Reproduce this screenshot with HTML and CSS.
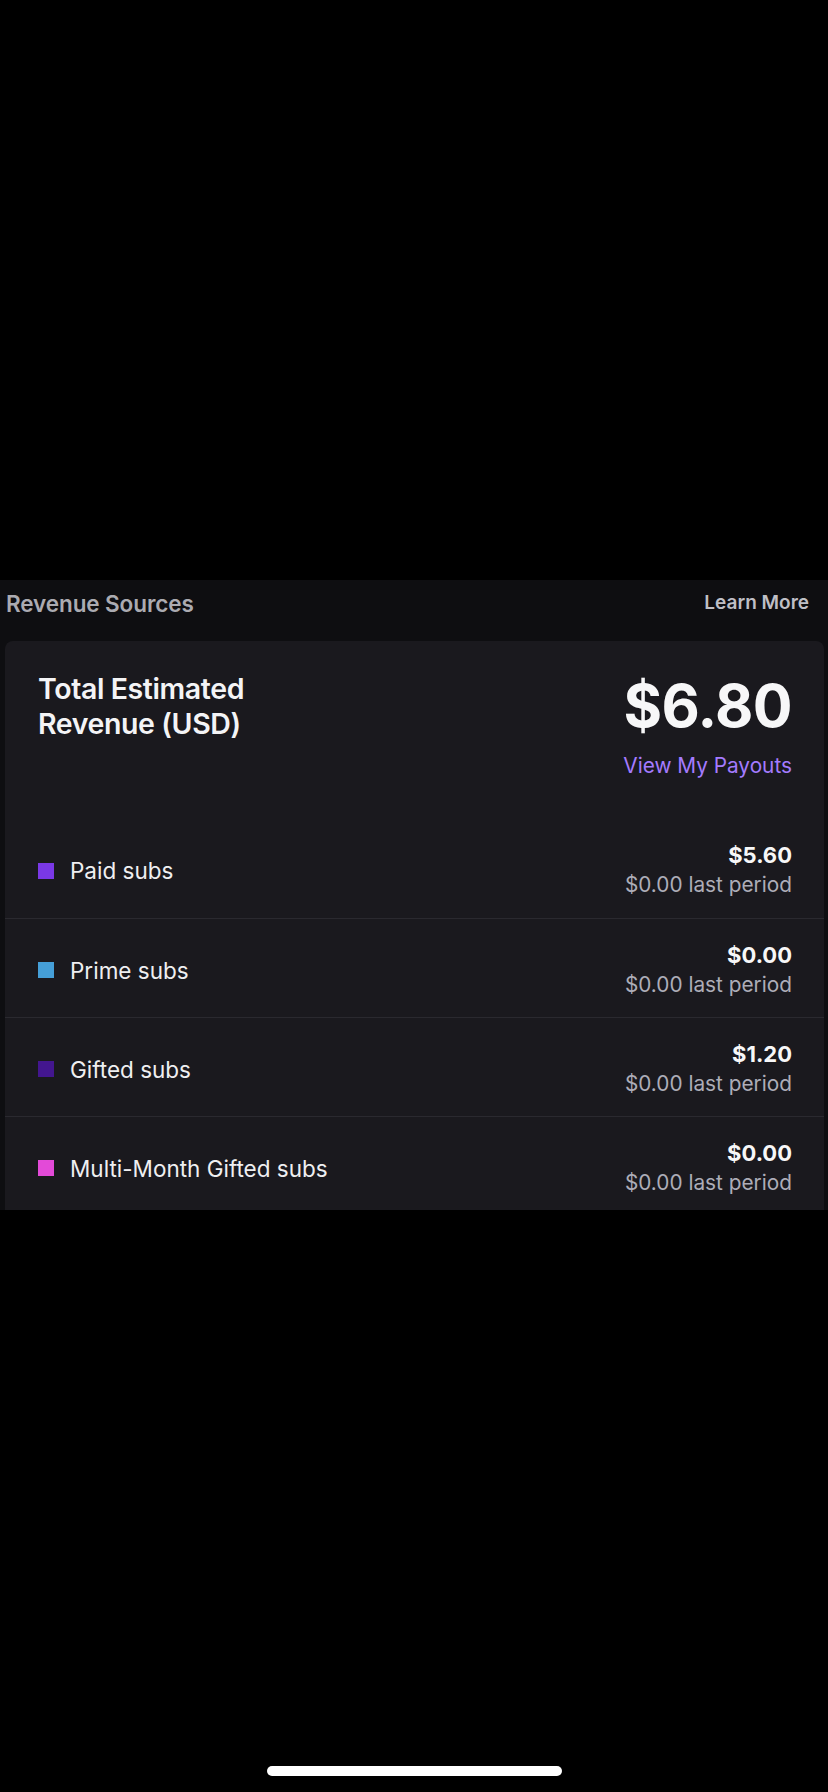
FILE: index.html
```html
<!DOCTYPE html>
<html lang="en">
<head>
<meta charset="utf-8">
<title>Revenue Sources</title>
<link rel="stylesheet" href="styles.css">
</head>
<body>
<div class="top-space"></div>
<section class="section">
  <header class="section-head">
    <h2 class="section-title">Revenue Sources</h2>
    <a class="learn-more" href="#">Learn More</a>
  </header>
  <div class="card">
    <div class="card-head">
      <h3 class="total-title">Total Estimated<br>Revenue (USD)</h3>
      <div class="total-side">
        <div class="total-amount">$6.80</div>
        <a class="payouts-link" href="#">View My Payouts</a>
      </div>
    </div>
    <ul class="rows">
      <li class="row">
        <div class="row-label"><span class="swatch swatch-paid"></span><span>Paid subs</span></div>
        <div class="row-values"><div class="row-amount">$5.60</div><div class="row-prev">$0.00 last period</div></div>
      </li>
      <li class="row">
        <div class="row-label"><span class="swatch swatch-prime"></span><span>Prime subs</span></div>
        <div class="row-values"><div class="row-amount">$0.00</div><div class="row-prev">$0.00 last period</div></div>
      </li>
      <li class="row">
        <div class="row-label"><span class="swatch swatch-gifted"></span><span>Gifted subs</span></div>
        <div class="row-values"><div class="row-amount">$1.20</div><div class="row-prev">$0.00 last period</div></div>
      </li>
      <li class="row">
        <div class="row-label"><span class="swatch swatch-multi"></span><span>Multi-Month Gifted subs</span></div>
        <div class="row-values"><div class="row-amount">$0.00</div><div class="row-prev">$0.00 last period</div></div>
      </li>
    </ul>
  </div>
</section>
<div class="bottom-space">
  <div class="home-indicator"></div>
</div>
</body>
</html>
```

FILE: styles.css
```css
* { box-sizing: border-box; }
html, body {
  margin: 0;
  padding: 0;
  background: #000;
  font-family: Inter, "Noto Sans", "Liberation Sans", sans-serif;
  color: #efeff1;
}
.top-space { height: 580px; }
.section {
  height: 630px;
  overflow: hidden;
  background: #0e0e11;
}
.section-head {
  height: 61px;
  display: flex;
  justify-content: space-between;
  align-items: flex-start;
  padding: 11px 19px 0 6px;
}
.section-title {
  margin: 0;
  font-size: 22.5px;
  line-height: 26px;
  font-weight: 600;
  color: #ababb1;
  letter-spacing: -0.1px;
}
.learn-more {
  font-size: 19px;
  line-height: 22px;
  font-weight: 600;
  color: #bfbfc5;
  text-decoration: none;
  margin-top: 1px;
}
.card {
  margin: 0 4px 0 5px;
  background: #1a191e;
  border-radius: 8px 8px 0 0;
}
.card-head {
  height: 178px;
  display: flex;
  justify-content: space-between;
  align-items: flex-start;
  padding: 30px 32px 0 33px;
}
.total-title {
  margin: 0;
  font-size: 28.5px;
  line-height: 35px;
  font-weight: 600;
  letter-spacing: -0.4px;
  color: #f4f4f6;
}
.total-side {
  display: flex;
  flex-direction: column;
  align-items: flex-end;
  padding-top: 4px;
}
.total-amount {
  font-size: 59px;
  line-height: 62px;
  font-weight: 700;
  letter-spacing: -0.6px;
  color: #f7f7f8;
}
.payouts-link {
  margin-top: 16px;
  font-size: 20.8px;
  line-height: 25px;
  color: #a47bff;
  text-decoration: none;
}
.rows {
  list-style: none;
  margin: 0;
  padding: 0;
}
.row {
  height: 99px;
  display: flex;
  align-items: center;
  justify-content: space-between;
  padding: 4px 32px 0 33px;
}
.row + .row { border-top: 1px solid #2a292f; }
.row-label {
  display: flex;
  align-items: center;
  gap: 16px;
  font-size: 22.5px;
  line-height: 27px;
  color: #efeff1;
}
.swatch {
  width: 16px;
  height: 16px;
  flex: none;
}
.swatch-paid { background: #7a38e6; }
.swatch-prime { background: #459fd8; }
.swatch-gifted { background: #43168f; }
.swatch-multi { background: #e34ad8; }
.row-values { text-align: right; }
.row-amount {
  font-size: 22px;
  line-height: 29px;
  font-weight: 700;
  color: #f7f7f8;
}
.row-prev {
  font-size: 20.8px;
  line-height: 30px;
  color: #adadb8;
}
.bottom-space {
  height: 582px;
  display: flex;
  align-items: flex-end;
  justify-content: center;
  padding-bottom: 16px;
}
.home-indicator {
  width: 295px;
  height: 10px;
  border-radius: 5px;
  background: #fff;
}
```
